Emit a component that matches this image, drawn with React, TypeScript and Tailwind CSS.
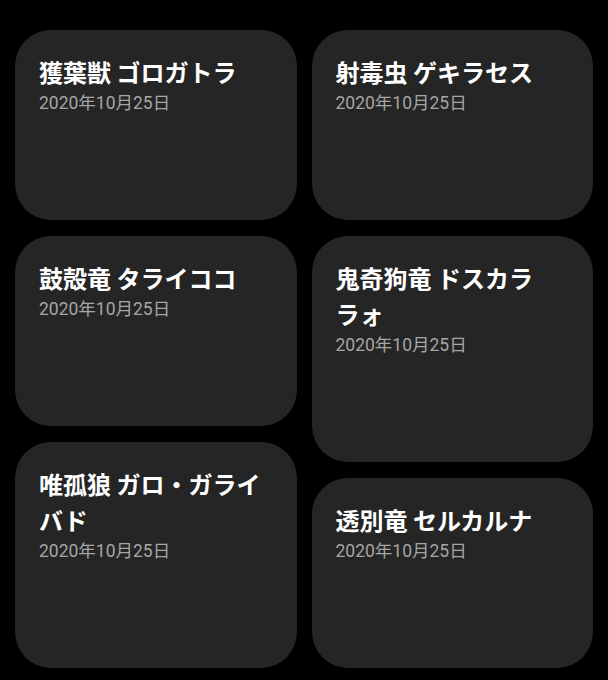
const left = [
  { title: "獲葉獣 ゴロガトラ", date: "2020年10月25日" },
  { title: "鼓殻竜 タライココ", date: "2020年10月25日" },
  { title: "唯孤狼 ガロ・ガライバド", date: "2020年10月25日" },
];

const right = [
  { title: "射毒虫 ゲキラセス", date: "2020年10月25日" },
  // keep the small kana with the one before it, as the original wraps
  { title: "鬼奇狗竜 ドスカララ\u2060ォ", date: "2020年10月25日" },
  { title: "透別竜 セルカルナ", date: "2020年10月25日" },
];

function Card({ title, date }: { title: string; date: string }) {
  return (
    <div className="bg-[#252525] rounded-[36px] px-6 pt-6 pb-[104px]">
      <h2 className="text-white text-[24px] leading-[36px] font-bold font-['Noto_Sans_CJK_JP',sans-serif]">
        {title}
      </h2>
      <p className="mt-[1px] text-[#a6a6a6] text-[17.5px] leading-[25px] font-['Roboto','Noto_Sans_CJK_JP',sans-serif]">
        {date}
      </p>
    </div>
  );
}

export default function App() {
  return (
    <div className="w-[608px] h-[680px] bg-black overflow-hidden">
      <div className="flex gap-[15px] px-[15px] pt-[30px]">
        <div className="flex-1 flex flex-col gap-4">
          {left.map((c) => (
            <Card key={c.title} {...c} />
          ))}
        </div>
        <div className="flex-1 flex flex-col gap-4">
          {right.map((c) => (
            <Card key={c.title} {...c} />
          ))}
        </div>
      </div>
    </div>
  );
}
